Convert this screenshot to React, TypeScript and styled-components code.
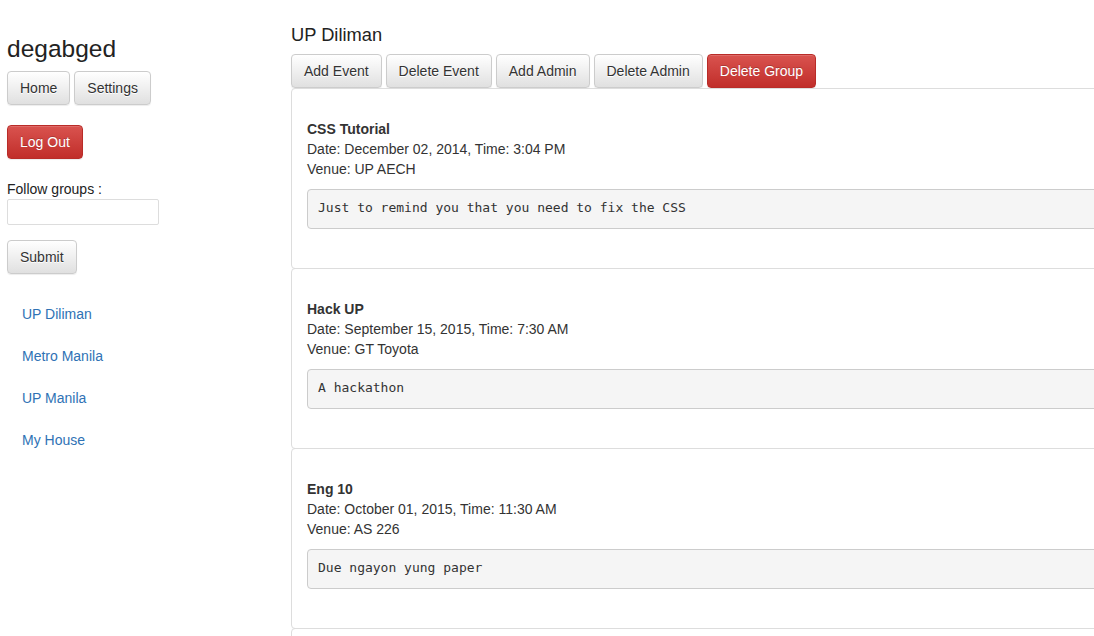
import React from "react";
import styled, { createGlobalStyle, css } from "styled-components";

const Global = createGlobalStyle`
  * { box-sizing: border-box; }
  html, body { margin: 0; padding: 0; background: #fff; overflow: hidden; }
  body {
    font-family: "Liberation Sans", Arial, Helvetica, sans-serif;
    font-size: 14px;
    line-height: 1.42857;
    color: #333;
  }
`;

const Page = styled.div`
  display: grid;
  grid-template-columns: 291px 860px;
  width: 1151px;
  height: 636px;
  overflow: hidden;
`;

const Sidebar = styled.aside`
  display: flex;
  flex-direction: column;
  align-items: flex-start;
  padding-left: 7px;
`;

const UserName = styled.h1`
  margin: 36px 0 0;
  font-size: 24.5px;
  font-weight: 500;
  line-height: 26px;
  color: #222;
`;

const ButtonRow = styled.div<{ $top: number }>`
  display: flex;
  gap: 4px;
  margin-top: ${(p) => p.$top}px;
`;

const Btn = styled.button<{ $danger?: boolean; $top?: number }>`
  display: inline-block;
  height: 34px;
  padding: 6px 12px;
  margin: ${(p) => p.$top ?? 0}px 0 0;
  font-family: inherit;
  font-size: 14px;
  line-height: 20px;
  border-radius: 4px;
  cursor: pointer;
  white-space: nowrap;
  ${(p) =>
    p.$danger
      ? css`
          color: #fff;
          background: linear-gradient(to bottom, #d9534f 0%, #c12e2a 100%);
          border: 1px solid #b92c28;
          text-shadow: 0 -1px 0 rgba(0, 0, 0, 0.2);
          box-shadow: inset 0 1px 0 rgba(255, 255, 255, 0.15), 0 1px 1px rgba(0, 0, 0, 0.075);
        `
      : css`
          color: #333;
          background: linear-gradient(to bottom, #fff 0%, #e0e0e0 100%);
          border: 1px solid #ccc;
          text-shadow: 0 1px 0 #fff;
          box-shadow: inset 0 1px 0 rgba(255, 255, 255, 0.15), 0 1px 1px rgba(0, 0, 0, 0.075);
        `}
`;

const FieldLabel = styled.label`
  display: block;
  margin-top: 20px;
  line-height: 20px;
  color: #222;
`;

const TextInput = styled.input`
  width: 152px;
  height: 26px;
  margin: 0;
  padding: 2px 4px;
  border: 1px solid #ddd;
  border-radius: 2px;
  font-family: inherit;
  font-size: 14px;
  background: #fff;
`;

const GroupNav = styled.ul`
  list-style: none;
  margin: 20px 0 0;
  padding: 0;
  display: flex;
  flex-direction: column;
  gap: 2px;
`;

const GroupLink = styled.a`
  display: block;
  padding: 10px 15px;
  line-height: 20px;
  color: #2f72b5;
  text-decoration: none;
`;

const Main = styled.main`
  display: flex;
  flex-direction: column;
`;

const GroupTitle = styled.h2`
  margin: 25px 0 0;
  font-size: 18.3px;
  font-weight: 500;
  line-height: 20px;
  color: #222;
`;

const EventList = styled.div`
  display: flex;
  flex-direction: column;
`;

const EventCard = styled.section`
  border: 1px solid #ddd;
  border-radius: 4px;
  margin-bottom: -1px;
  padding: 31px 15px 28px;
  height: 181px;
  flex-shrink: 0;
`;

const EventTitle = styled.div`
  font-weight: bold;
  color: #333;
`;

const EventLine = styled.div`
  color: #333;
`;

const Note = styled.pre`
  margin: 9px 0 10px;
  padding: 9.5px 10px;
  font-family: "DejaVu Sans Mono", "Liberation Mono", monospace;
  font-size: 13px;
  line-height: 1.42857;
  color: #333;
  background: #f5f5f5;
  border: 1px solid #ccc;
  border-radius: 4px;
  white-space: pre-wrap;
`;

const groups = ["UP Diliman", "Metro Manila", "UP Manila", "My House"];

const events = [
  {
    title: "CSS Tutorial",
    date: "December 02, 2014",
    time: "3:04 PM",
    venue: "UP AECH",
    note: "Just to remind you that you need to fix the CSS",
  },
  {
    title: "Hack UP",
    date: "September 15, 2015",
    time: "7:30 AM",
    venue: "GT Toyota",
    note: "A hackathon",
  },
  {
    title: "Eng 10",
    date: "October 01, 2015",
    time: "11:30 AM",
    venue: "AS 226",
    note: "Due ngayon yung paper",
  },
];

export default function App() {
  return (
    <>
      <Global />
      <Page>
        <Sidebar>
          <UserName>degabged</UserName>
          <ButtonRow $top={9}>
            <Btn>Home</Btn>
            <Btn>Settings</Btn>
          </ButtonRow>
          <Btn $danger $top={20}>
            Log Out
          </Btn>
          <FieldLabel htmlFor="follow">Follow groups :</FieldLabel>
          <TextInput id="follow" type="text" />
          <Btn $top={15}>Submit</Btn>
          <GroupNav>
            {groups.map((g) => (
              <li key={g}>
                <GroupLink href="#">{g}</GroupLink>
              </li>
            ))}
          </GroupNav>
        </Sidebar>
        <Main>
          <GroupTitle>UP Diliman</GroupTitle>
          <ButtonRow $top={9}>
            <Btn>Add Event</Btn>
            <Btn>Delete Event</Btn>
            <Btn>Add Admin</Btn>
            <Btn>Delete Admin</Btn>
            <Btn $danger>Delete Group</Btn>
          </ButtonRow>
          <EventList>
            {events.map((e) => (
              <EventCard key={e.title}>
                <EventTitle>{e.title}</EventTitle>
                <EventLine>
                  Date: {e.date}, Time: {e.time}
                </EventLine>
                <EventLine>Venue: {e.venue}</EventLine>
                <Note>{e.note}</Note>
              </EventCard>
            ))}
            <EventCard aria-hidden="true" />
          </EventList>
        </Main>
      </Page>
    </>
  );
}
